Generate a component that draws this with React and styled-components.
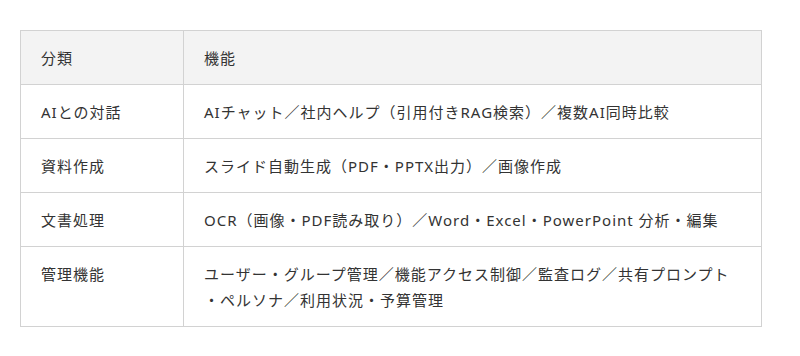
import React from "react";
import styled, { createGlobalStyle } from "styled-components";

const Global = createGlobalStyle`
  html, body { margin: 0; padding: 0; background: #fff; }
  body { font-family: "Noto Sans", "Noto Sans CJK JP", sans-serif; color: #333; }
`;

const Page = styled.div`
  padding: 30px 20px;
`;

const Table = styled.table`
  width: 742px;
  border-collapse: collapse;
  font-size: 15px;
  line-height: 26px;
  letter-spacing: 1px;
`;

const Th = styled.th`
  background: #f3f3f3;
  font-weight: normal;
  text-align: left;
  padding: 13.5px 20px;
  border: 1px solid #d2d2d2;
  width: ${(p) => (p.$narrow ? "122px" : "auto")};
`;

const Td = styled.td`
  text-align: left;
  vertical-align: top;
  padding: 13.5px 20px;
  border: 1px solid #d2d2d2;
`;

const rows = [
  ["AIとの対話", ["AIチャット／社内ヘルプ（引用付きRAG検索）／複数AI同時比較"]],
  ["資料作成", ["スライド自動生成（PDF・PPTX出力）／画像作成"]],
  ["文書処理", ["OCR（画像・PDF読み取り）／Word・Excel・PowerPoint 分析・編集"]],
  ["管理機能", ["ユーザー・グループ管理／機能アクセス制御／監査ログ／共有プロンプト", "・ペルソナ／利用状況・予算管理"]],
];

export default function App() {
  return (
    <>
      <Global />
      <Page>
        <Table>
          <thead>
            <tr>
              <Th $narrow>分類</Th>
              <Th>機能</Th>
            </tr>
          </thead>
          <tbody>
            {rows.map(([a, lines]) => (
              <tr key={a}>
                <Td>{a}</Td>
                <Td>
                  {lines.map((l, i) => (
                    <React.Fragment key={i}>
                      {i > 0 && <br />}
                      {l}
                    </React.Fragment>
                  ))}
                </Td>
              </tr>
            ))}
          </tbody>
        </Table>
      </Page>
    </>
  );
}
